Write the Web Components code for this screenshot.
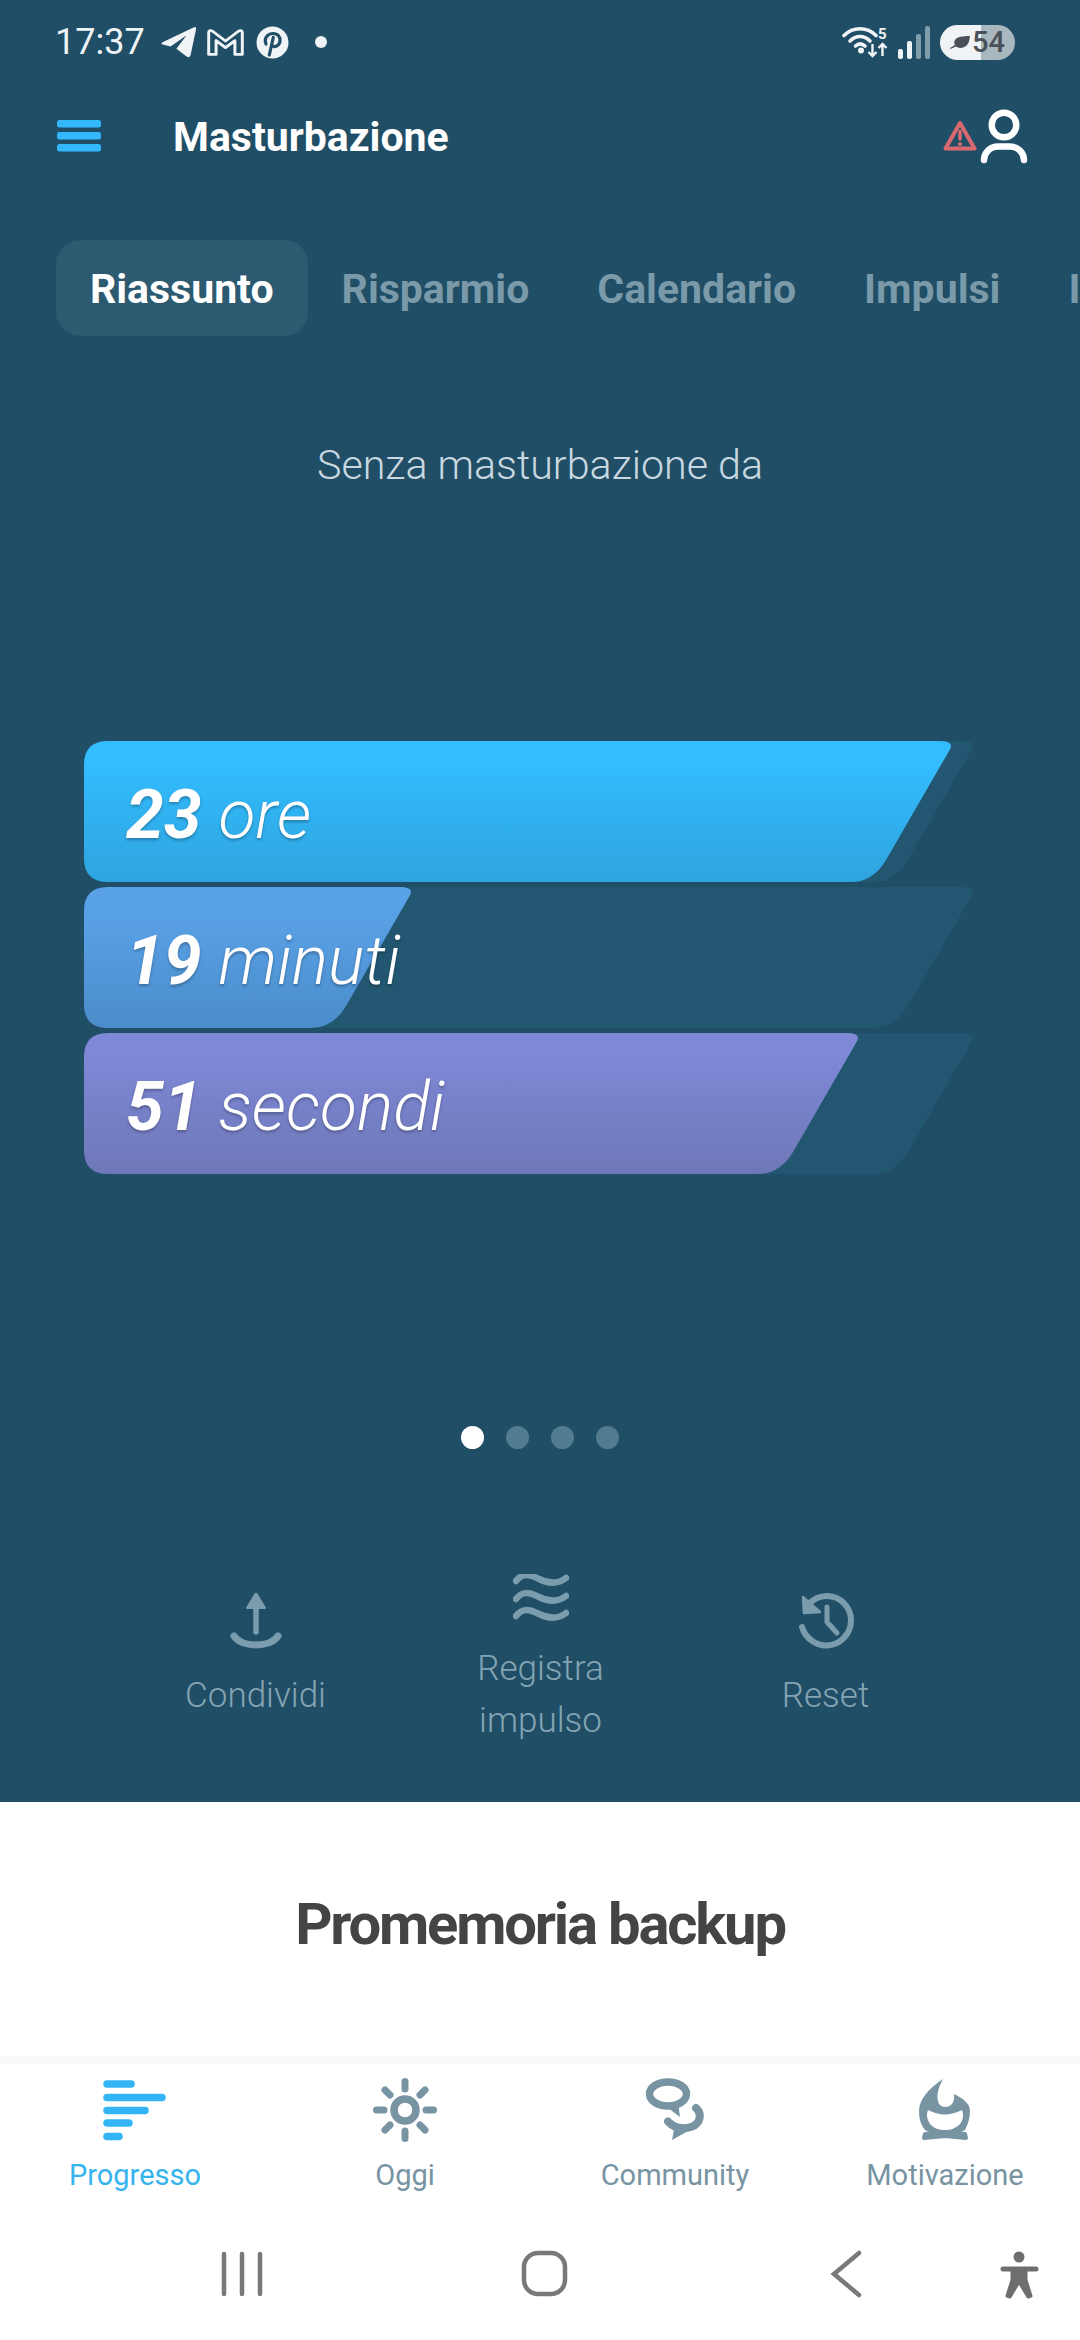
<!DOCTYPE html>
<html lang="it">
<head>
<meta charset="utf-8">
<title>Masturbazione</title>
<style>
  html, body { margin: 0; padding: 0; background: #204e66; }
  body { width: 1080px; height: 2340px; overflow: hidden; font-family: Roboto, "Liberation Sans", sans-serif; }
</style>
</head>
<body>
<app-screen>
  <status-bar></status-bar>
  <top-bar>Masturbazione</top-bar>
  <tab-strip>
    <tab-item active>Riassunto</tab-item>
    <tab-item>Risparmio</tab-item>
    <tab-item>Calendario</tab-item>
    <tab-item>Impulsi</tab-item>
    <tab-item>I</tab-item>
  </tab-strip>
  <streak-card heading="Senza masturbazione da">
    <streak-bar top="871" c1="#33bcff" c2="#2ea4de"><b>23</b> <span>ore</span></streak-bar>
    <streak-bar top="331" c1="#5aa2e8" c2="#4a8dca"><b>19</b> <span>minuti</span></streak-bar>
    <streak-bar top="778" c1="#7e88d6" c2="#6e78b8"><b>51</b> <span>secondi</span></streak-bar>
  </streak-card>
  <page-dots></page-dots>
  <action-row>
    <action-button icon="share" style="padding-bottom:6px">Condividi</action-button>
    <action-button icon="waves">Registra<br>impulso</action-button>
    <action-button icon="reset" style="padding-bottom:6px">Reset</action-button>
  </action-row>
  <backup-sheet>Promemoria backup</backup-sheet>
  <tab-bar>
    <nav-tab icon="progress" active>Progresso</nav-tab>
    <nav-tab icon="sun">Oggi</nav-tab>
    <nav-tab icon="chat">Community</nav-tab>
    <nav-tab icon="flame">Motivazione</nav-tab>
  </tab-bar>
  <system-nav></system-nav>
</app-screen>

<script>
// Small helper: registers an element whose shadow root is built from a style and a markup string.
function element(name, css, html) {
  customElements.define(name, class extends HTMLElement {
    constructor() {
      super();
      const root = this.attachShadow({ mode: 'open' });
      root.innerHTML = `<style>${css}</style>`;
    }
    connectedCallback() {
      if (this.shadowRoot.childElementCount > 1) return;
      const markup = typeof html === 'function' ? html(this) : html;
      this.shadowRoot.innerHTML += markup;
    }
  });
}

element('app-screen',
  `:host { display:flex; flex-direction:column; width:1080px; height:2340px; background:#204e66; overflow:hidden; }`,
  `<slot></slot>`);

/* Phone status bar: clock, notification icons, radio state, battery */
element('status-bar',
  `:host { display:flex; align-items:center; height:84px; padding:0 65px 0 55px; box-sizing:border-box; color:#eef3f6; }
   .time { font-size:36px; font-weight:400; width:88px; letter-spacing:0; line-height:1; }
   svg { display:block; flex:none; }
   .tg { margin-left:18px; } .gm { margin-left:10px; } .pin { margin-left:12px; } .dot { margin-left:26px; }
   .end { margin-left:auto; display:flex; align-items:center; }
   .wifi { margin-right:10px; }
   .bat { position:relative; width:75px; height:35px; border-radius:18px; overflow:hidden; margin-left:10px;
          background:linear-gradient(90deg,#f0f3f5 0 41px,#a9b7bf 41px); color:#4a5058; }
   .bat svg { position:absolute; left:9px; top:11px; }
   .bat span { position:absolute; left:32px; top:0; line-height:35px; font-size:29px; font-weight:500; }`,
  `<span class="time">17:37</span>
   <svg class="tg" width="36" height="32" viewBox="0 0 36 32"><path fill="#f1f4f6" d="M1 16.500 33 1.200Q35.600.3 35 3.400L29.600 29Q28.800 32.400 25.600 30.400L15.400 22.800 25.400 9.500 9.500 20.600 1.600 18.600Q0 18 1 16.500Z"/></svg>
   <svg class="gm" width="37" height="27" viewBox="0 0 35 27" preserveAspectRatio="none"><path fill="none" stroke="#f1f4f6" stroke-width="2.800" stroke-linejoin="round" d="M5 2 17.500 12 30 2Q33.400.6 33.400 4V25.400H26.400V11.600L17.500 18.600 8.600 11.600V25.400H1.600V4Q1.600.6 5 2Z"/></svg>
   <svg class="pin" width="33" height="33" viewBox="0 0 32 33"><circle cx="16" cy="16.500" r="16" fill="#f1f4f6"/><path fill="none" stroke="#204e66" stroke-width="3.200" stroke-linecap="round" d="M9.500 18C7 12 11.500 7.500 16.500 7.500 21.500 7.500 24 11 23.500 15 23 19.500 18.500 22 15.500 19.500M16.800 11.500 12.800 29"/></svg>
   <svg class="dot" width="12" height="12" viewBox="0 0 12 12"><circle cx="6" cy="6" r="6" fill="#eef3f6"/></svg>
   <span class="end">
     <svg class="wifi" width="46" height="32" viewBox="842 26 46 32">
       <g fill="none" stroke="#f1f4f6" stroke-width="3.600" stroke-linecap="round">
         <path d="M844 35.500C853 26.500 867 26.500 876 35.500"/>
         <path d="M850 41C856 35 864 35 870 41"/>
         <path d="M855.500 46C858.500 43.200 862 43.200 865 46"/>
       </g>
       <circle cx="861" cy="50.500" r="3" fill="#f1f4f6"/>
       <text x="878" y="38.500" font-family="Roboto" font-size="15" font-weight="700" fill="#f1f4f6">5</text>
       <path fill="none" stroke="#f1f4f6" stroke-width="2.400" d="M872.500 44V56M868.500 52 872.500 56 876.500 52M882.500 56V44M878.500 48 882.500 44 886.500 48"/>
     </svg>
     <svg width="32" height="33" viewBox="0 0 32 33">
       <rect x="0" y="23" width="5" height="10" rx="2" fill="#f1f4f6"/>
       <rect x="9" y="15" width="5" height="18" rx="2" fill="#f1f4f6"/>
       <rect x="18" y="8" width="5" height="25" rx="2" fill="#7f9cab"/>
       <rect x="27" y="0" width="5" height="33" rx="2" fill="#7f9cab"/>
     </svg>
     <span class="bat">
       <svg width="21" height="14" viewBox="0 0 21 14"><path fill="#4a5058" d="M21 0C14 0 7 .5 5.500 5 5 6.800 5.200 8 6 9L1 12 1.500 13 7 10.500C9 12.500 14 12.500 17 10 20 7.500 20.500 3.500 21 0Z"/></svg>
       <span>54</span>
     </span>
   </span>`);

/* App header with menu button, title and account icons */
element('top-bar',
  `:host { display:flex; align-items:center; height:72px; margin-top:16px; padding:0 52px 0 57px; box-sizing:border-box; color:#fff; }
   svg { display:block; flex:none; }
   .title { margin-left:72px; padding-top:2px; font-size:41px; font-weight:700; line-height:1; }
   .warn { margin-left:auto; }
   .user { margin-left:3px; }`,
  `<svg width="44" height="32" viewBox="0 0 44 32"><g fill="#33b9fb"><rect y="0" width="44" height="7.500" rx="2.500"/><rect y="12" width="44" height="7.500" rx="2.500"/><rect y="24" width="44" height="7.500" rx="2.500"/></g></svg>
   <span class="title"><slot></slot></span>
   <svg class="warn" width="34" height="32" viewBox="0 0 34 32"><path fill="none" stroke="#d9686f" stroke-width="4" stroke-linejoin="round" d="M17 3 31.500 28.500H2.500Z"/><path stroke="#d9686f" stroke-width="3.600" stroke-linecap="round" d="M17 11.500V19"/><circle cx="17" cy="24" r="2" fill="#d9686f"/></svg>
   <svg class="user" width="48" height="56" viewBox="0 0 48 56"><g fill="none" stroke="#fff" stroke-width="6.400" stroke-linecap="round"><circle cx="24" cy="17" r="12.300"/><path d="M4 52C4 45 10 38.500 18 38.500H30C38 38.500 44 45 44 52"/></g></svg>`);

/* Horizontally scrolling tabs, cut off at the right edge */
element('tab-strip',
  `:host { display:flex; align-items:center; height:96px; margin-top:68px; padding-left:56px; overflow:hidden; white-space:nowrap; }`,
  `<slot></slot>`);
element('tab-item',
  `:host { display:flex; align-items:center; flex:none; height:96px; padding:2px 34px 0; border-radius:24px; box-sizing:border-box;
           font-size:41px; font-weight:700; color:#7a9aa9; }
   :host([active]) { color:#fff; background:#2c5a70; }`,
  `<slot></slot>`);

/* Caption and the three time bars */
element('streak-card',
  `:host { display:flex; flex-direction:column; }
   h2 { margin:98px 0 0; height:62px; line-height:62px; text-align:center; font-size:41.200px; font-weight:300; color:#c9d8e0; }
   .bars { display:flex; flex-direction:column; gap:5px; margin:245px 0 0 84px; }`,
  el => `<h2>${el.getAttribute('heading')}</h2><div class="bars"><slot></slot></div>`);

element('streak-bar',
  `:host { display:block; position:relative; height:141px; }
   svg { position:absolute; left:0; top:0; }
   .label { position:relative; display:block; padding:4px 0 0 42px; height:137px; line-height:141px; font-size:68px; font-style:italic; color:#fff; text-shadow:0 2px 3px rgba(0,0,0,.28); white-space:nowrap; }
   ::slotted(b) { font-weight:700; }
   ::slotted(span) { font-weight:300; }`,
  el => {
    const shape = x => `M24 0H${x - 16}Q${x + 1} 0 ${x - 6} 10L${x - 69} 119Q${x - 82} 141 ${x - 104} 141H24Q0 141 0 117V24Q0 0 24 0Z`;
    const top = +el.getAttribute('top');
    return `<svg width="900" height="141" viewBox="0 0 900 141">
      <defs><linearGradient id="g" x1="0" y1="0" x2="0" y2="1"><stop offset=".15" stop-color="${el.getAttribute('c1')}"/><stop offset="1" stop-color="${el.getAttribute('c2')}"/></linearGradient></defs>
      <path fill="#235771" d="${shape(893)}"/>
      <path fill="url(#g)" d="${shape(top)}"/>
    </svg><span class="label"><slot></slot></span>`;
  });

/* Pager dots under the bars */
element('page-dots',
  `:host { display:flex; justify-content:flex-start; gap:22px; margin:252px 0 0 461px; }
   i { width:23px; height:23px; border-radius:50%; background:#537b90; }
   i:first-of-type { background:#fff; }`,
  `<i></i><i></i><i></i><i></i>`);

/* Share, log urge and reset actions */
element('action-row',
  `:host { display:grid; grid-template-columns:285px 285px 285px; align-items:center; height:176px; margin:123px 0 0 113px; }`,
  `<slot></slot>`);
const actionIcons = {
  share: `<svg width="56" height="56" viewBox="228 1593 56 56"><g fill="none" stroke="#7b9cac"><path stroke-width="5.500" stroke-linecap="round" d="M256 1603V1632"/><path stroke-width="7" stroke-linecap="round" d="M234 1636C242 1648 270 1648 278 1636"/></g><path fill="#7b9cac" d="M256 1593 265 1608H247Z" stroke="#7b9cac" stroke-linejoin="round" stroke-width="2"/></svg>`,
  waves: `<svg width="56" height="48" viewBox="0 2 56 48"><g fill="none" stroke="#7b9cac" stroke-width="6.500" stroke-linecap="round"><path d="M3 9C9 1 16 2 26 7S45 12 53 6"/><path d="M3 27C9 19 16 20 26 25S45 30 53 24"/><path d="M3 44C9 36 16 37 26 42S45 47 53 41"/></g></svg>`,
  reset: `<svg width="56" height="56" viewBox="798 1593 56 56"><g fill="none" stroke="#7b9cac" stroke-width="6" stroke-linecap="round"><path d="M802 1627C806 1640 818 1646 827 1645.500 840 1645 851 1634 851 1620.500 851 1607 840 1596 827 1596 819 1596 813 1599 808 1605"/><path stroke-width="5" stroke-linejoin="round" d="M827 1607V1622L837 1633"/></g><path fill="#7b9cac" stroke="#7b9cac" stroke-width="2.500" stroke-linejoin="round" d="M803 1597 804 1613 820 1612Z"/></svg>`
};
element('action-button',
  `:host { display:flex; flex-direction:column; align-items:center; text-align:center; font-size:35px; font-weight:300; line-height:52px; color:#84a4b3; }
   svg { display:block; margin-bottom:21px; }`,
  el => `${actionIcons[el.getAttribute('icon')]}<span><slot></slot></span>`);

/* White sheet rising from the bottom */
element('backup-sheet',
  `:host { display:block; margin-top:54px; height:254px; background:#fff; box-sizing:border-box; padding-top:90px; text-align:center;
           font-size:58px; font-weight:700; line-height:64px; color:#444; letter-spacing:-2.200px; }`,
  `<slot></slot>`);

/* Bottom navigation */
const navIcons = {
  progress: `<svg width="64" height="62" viewBox="102 2078 64 62"><g stroke="#33b5f5" stroke-width="7.500" stroke-linecap="round"><path d="M106 2083H130"/><path d="M106 2096.500H161"/><path d="M106 2109.500H144"/><path d="M106 2122H128"/><path d="M106 2135.500H118"/></g></svg>`,
  sun: `<svg width="64" height="64" viewBox="-32 -32 64 64"><circle r="11" fill="none" stroke="#7894a3" stroke-width="7.500"/><g stroke="#7894a3" stroke-width="7" stroke-linecap="round"><path d="M0-21V-28.500M0 21V28.500M-21 0H-28.500M21 0H28.500M-15-15-20-20M15-15 20-20M-15 15-20 20M15 15 20 20"/></g></svg>`,
  chat: `<svg width="60" height="64" viewBox="645 2078 60 64"><ellipse cx="668" cy="2094" rx="18.500" ry="12" fill="none" stroke="#7894a3" stroke-width="7.500"/><path fill="#7894a3" d="M664 2105 680 2117 678 2102Z"/><path fill="none" stroke="#7894a3" stroke-width="8" stroke-linecap="round" d="M696 2108C702 2113 701 2124 691 2127 682 2129.500 674 2128 668 2121.500"/><path fill="#7894a3" d="M675 2124 672 2140 690 2130Z"/></svg>`,
  flame: `<svg width="54" height="64" viewBox="918 2078 54 64"><path fill="#7894a3" fill-rule="evenodd" d="M943 2079C928 2089 919 2100 919 2111 919 2119 921 2125 925 2130L935 2135H955L965 2130C968 2124 970 2118 970 2111 970 2103 962 2098 954 2094 955 2101 952 2107 945 2107 937 2107 934 2095 943 2079ZM928 2110C932 2112 938 2114.500 945 2114.500 952 2114.500 958 2112 962 2110 964 2116 963 2120 960 2124 955 2129 950 2130 945 2130 939 2130 934 2128 931 2125 927 2120 926 2115 928 2110Z"/><path fill="#7894a3" stroke="#7894a3" stroke-width="4" stroke-linejoin="round" d="M925 2134 945 2132 965 2134 966 2138 945 2136 924 2138Z"/></svg>`
};
element('tab-bar',
  `:host { display:grid; grid-template-columns:repeat(4,270px); height:146px; background:#fff; border-top:8px solid #f9f9f9; }`,
  `<slot></slot>`);
element('nav-tab',
  `:host { display:flex; flex-direction:column; align-items:center; padding-top:14px; font-size:29px; line-height:36px; color:#7894a3; white-space:nowrap; }
   :host([active]) { color:#35b4ee; }
   .icon { height:64px; display:flex; align-items:center; margin-bottom:15px; }
   svg { display:block; }`,
  el => `<span class="icon">${navIcons[el.getAttribute('icon')]}</span><slot></slot>`);

/* Android system navigation */
element('system-nav',
  `:host { display:block; position:relative; flex:1; background:#fff; }
   svg { position:absolute; left:0; top:0; }`,
  `<svg width="1080" height="130" viewBox="0 2210 1080 130">
     <g fill="none" stroke="#797979" stroke-linecap="round">
       <path stroke-width="4.500" d="M224 2254V2294M242 2254V2294M260 2254V2294"/>
       <rect x="524" y="2253" width="41" height="41" rx="14" stroke-width="4.500"/>
       <path stroke-width="4.500" d="M859 2253 834 2274 859 2295"/>
     </g>
     <circle cx="1019" cy="2257" r="5.500" fill="#6e6e6e"/>
     <path fill="none" stroke="#6e6e6e" stroke-width="5" stroke-linecap="round" d="M1003 2269H1036"/>
     <path fill="#6e6e6e" stroke="#6e6e6e" stroke-width="3" stroke-linejoin="round" d="M1012 2270H1026V2280L1031 2296 1028 2297 1019 2282 1010 2297 1007 2296 1012 2280Z"/>
   </svg>`);
</script>
</body>
</html>
